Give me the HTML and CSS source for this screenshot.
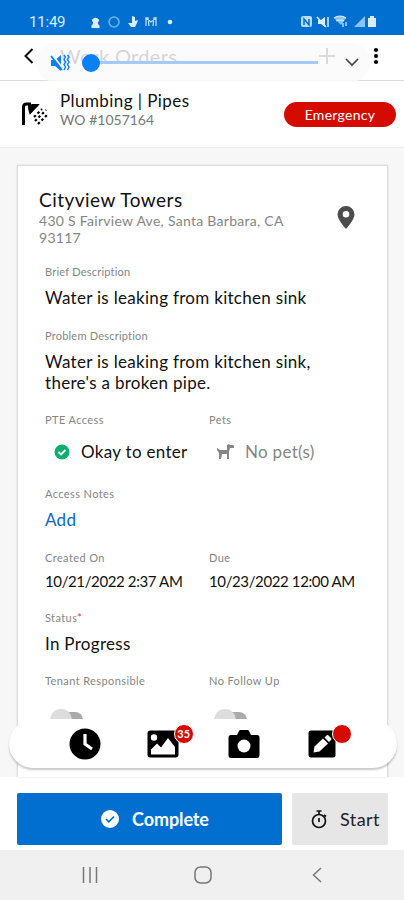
FILE: index.html
```html
<!DOCTYPE html>
<html lang="en">
<head>
  <meta charset="UTF-8">
  <meta name="viewport" content="width=device-width, initial-scale=1.0">
  <title>Work Orders</title>
  <link rel="stylesheet" href="styles.css">
</head>
<body>
  <div class="status-bar">
    <span class="clock">11:49</span>
    <svg class="status-left" width="86" height="14" viewBox="0 0 86 14" fill="none" stroke="#b9dcf6" stroke-width="1.5">
      <path d="M1.500 13v-2.500L3 9V6.500H2V4.500L3 4a3 3 0 0 1 5 0l1 .5v2H8V9l1.500 1.500V13z" fill="#d8eefc" stroke="none"/>
      <circle cx="24" cy="7" r="5" stroke="#73b5e8"/>
      <path d="M42 1l3 1v4l3-1-1 3-2 4h-4l-3-4h4z" fill="#d8eefc" stroke="none"/>
      <path d="M56 11V3l5 4 5-4v8M56 3h2l1 8M66 3h-2l-1 8" stroke-width="1.300"/>
      <circle cx="80" cy="7" r="2.300" fill="#d8eefc" stroke="none"/>
    </svg>
    <svg class="status-right" width="78" height="14" viewBox="0 0 78 14" fill="none" stroke="#d8eefc" stroke-width="1.500">
      <rect x="1" y="1" width="11" height="11" rx="2" fill="#b9dcf6" stroke="none"/>
      <path d="M4 10V4l5 6V4" stroke="#006fd0"/>
      <path d="M18 5h3l4-3v10l-4-3h-3z" fill="#d8eefc" stroke="none"/>
      <path d="M17 2l9 10M28 2v10" />
      <path d="M34 3q6-4 12 0l-5 7z" fill="#8dc4ee" stroke="none"/>
      <path d="M34 3q6-4 12 0M36 6q4-2 8 0M43 8v4M46 7v4" stroke-width="1.200"/>
      <path d="M65 1v11H54z" fill="#8dc4ee" stroke="none"/>
      <path d="M68 3h2V1h4v2h2v9h-8z" fill="#d8eefc" stroke="none"/>
    </svg>
  </div>

  <header class="header">
    <svg class="back" width="12" height="18" viewBox="0 0 12 18"><path d="M9.500 2L2.500 9l7 7" fill="none" stroke="#111" stroke-width="2"/></svg>
    <h1>Work Orders</h1>
    <svg class="plus" width="16" height="16" viewBox="0 0 16 16"><path d="M8 0v16M0 8h16" stroke="#333" stroke-width="2"/></svg>
    <svg class="more" width="6" height="18" viewBox="0 0 6 18"><circle cx="3" cy="3" r="2.100"/><circle cx="3" cy="9" r="2.100"/><circle cx="3" cy="15" r="2.100"/></svg>
    <div class="volume">
      <svg class="mute" width="20" height="20" viewBox="0 0 20 20" fill="none" stroke="#0a80f5" stroke-width="1.800">
        <path d="M1 7h4l6-5v16l-6-5H1z" fill="#0a80f5" stroke="none"/>
        <path d="M2 1l11 15" stroke="#fafafa" stroke-width="2"/>
        <path d="M1 3l11 14"/>
        <path d="M14 2l1.500 2L14 6.500 15.500 9 14 11.500l1.500 2.500L14 17M17.500 2L19 4l-1.500 2.500L19 9l-1.500 2.500L19 14l-1.500 3" stroke-width="1.400"/>
      </svg>
      <div class="slider"><span class="knob"></span></div>
      <svg class="expand" width="14" height="9" viewBox="0 0 14 9"><path d="M1 1l6 6 6-6" fill="none" stroke="#444" stroke-width="1.600"/></svg>
    </div>
  </header>

  <section class="job">
    <svg class="shower" width="27" height="24" viewBox="0 0 27 24">
      <path d="M2.500 23V5q0-3 3-3H10" fill="none" stroke="#000" stroke-width="3"/>
      <path d="M7 2q2 1 4 0h7q1 0 0 1L9.500 12q-1 1-1 0-2-5-1.500-10z"/>
      <g fill="none" stroke="#000" stroke-width="2.200" stroke-dasharray="2.500 2.500">
        <path d="M13 15l8-8M14 19l11-11M17 22l9-9"/>
      </g>
    </svg>
    <div class="job-text">
      <h2>Plumbing | Pipes</h2>
      <p>WO #1057164</p>
    </div>
    <span class="priority">Emergency</span>
  </section>

  <main class="content">
    <div class="card">
      <div class="location">
        <div>
          <h2>Cityview Towers</h2>
          <p class="street">430 S Fairview Ave, Santa Barbara, CA</p>
          <p class="zip">93117</p>
        </div>
        <svg class="pin" width="18" height="23" viewBox="0 0 18 23"><path fill="#4c4c4c" fill-rule="evenodd" d="M9 0a8.500 8.500 0 0 1 8.500 8.500C17.500 14 9 23 9 23S.5 14 .5 8.500A8.500 8.500 0 0 1 9 0zm0 5a3.300 3.300 0 1 0 0 6.600A3.300 3.300 0 0 0 9 5z"/></svg>
      </div>

      <div class="row brief">
        <div class="field"><label>Brief Description</label><p class="value">Water is leaking from kitchen sink</p></div>
      </div>
      <div class="row problem">
        <div class="field"><label>Problem Description</label><p class="value">Water is leaking from kitchen sink,</p><p class="value">there's a broken pipe.</p></div>
      </div>
      <div class="row access">
        <div class="field">
          <label>PTE Access</label>
          <div class="choice">
            <svg class="okay" width="16" height="16" viewBox="0 0 16 16"><circle cx="8" cy="8" r="7.500" fill="#0caf70"/><path d="M4.500 8l2.500 2.500L11.500 6" fill="none" stroke="#fff" stroke-width="1.800"/></svg>
            <p class="value">Okay to enter</p>
          </div>
        </div>
        <div class="field">
          <label>Pets</label>
          <div class="choice muted">
            <svg class="dog" width="18" height="16" viewBox="0 0 18 16" fill="#858585"><path d="M0 4l3 2h7V1l2-1 1 1h3l1 1v2h-4l-1 4v7h-2v-5H5L4 15H2V9L0 6z"/></svg>
            <p class="value">No pet(s)</p>
          </div>
        </div>
      </div>
      <div class="row notes">
        <div class="field"><label>Access Notes</label><a class="value link">Add</a></div>
      </div>
      <div class="row dates">
        <div class="field"><label>Created On</label><p class="value">10/21/2022 2:37 AM</p></div>
        <div class="field"><label>Due</label><p class="value">10/23/2022 12:00 AM</p></div>
      </div>
      <div class="row status">
        <div class="field"><label>Status<b>*</b></label><p class="value">In Progress</p></div>
      </div>
      <div class="row switches">
        <div class="field"><label>Tenant Responsible</label><span class="switch"></span></div>
        <div class="field"><label>No Follow Up</label><span class="switch"></span></div>
      </div>
    </div>
    <nav class="tools">
      <span class="tool">
        <svg width="32" height="32" viewBox="0 0 32 32"><circle cx="16" cy="16" r="15.500"/><path d="M16 6v10l7 5" fill="none" stroke="#fff" stroke-width="3.200"/></svg>
      </span>
      <span class="tool photos">
        <svg width="32" height="28" viewBox="0 0 32 28"><rect x=".5" y=".5" width="31" height="27" rx="3"/><circle cx="7" cy="7.500" r="3.200" fill="#fff"/><path d="M4 24.500v-5l6-6 4 4L21 8l7 9v7.500z" fill="#fff"/></svg>
        <b class="badge">35</b>
      </span>
      <span class="tool">
        <svg width="32" height="28" viewBox="0 0 32 28"><path d="M3 5h6l2-4q.5-1 1.500-1h7q1 0 1.500 1l2 4h6q2.500 0 2.500 2.500v17Q31.500 28 29 28H3Q.5 28 .5 25V8Q.5 5 3 5z"/><circle cx="16" cy="16" r="6.500" fill="#fff"/></svg>
      </span>
      <span class="tool">
        <svg width="28" height="28" viewBox="0 0 28 28"><rect x=".5" y=".5" width="27" height="27" rx="2.500"/><path d="M5.500 22.500l1-6 8.500-8 5 5-8.500 8zM16.500 7.500l2-2q1-1 2 0l2.500 2.500q1 1 0 2l-2 2z" fill="#fff"/></svg>
        <b class="badge dot"></b>
      </span>
    </nav>
  </main>

  <footer class="actions">
    <button class="complete">
      <svg width="18" height="18" viewBox="0 0 18 18"><circle cx="9" cy="9" r="9" fill="#fff"/><path d="M5 9l2.800 2.800L13 6.500" fill="none" stroke="#006fd0" stroke-width="1.700"/></svg>
      <span>Complete</span>
    </button>
    <button class="start">
      <svg width="16" height="19" viewBox="0 0 16 19" fill="none" stroke="#111" stroke-width="1.700"><circle cx="8" cy="11" r="6.500"/><path d="M5.500 1h5M8 1v3M13 5l2 1.500M8 8v4"/></svg>
      <span>Start</span>
    </button>
  </footer>

  <div class="android-nav">
    <svg width="16" height="16" viewBox="0 0 16 16"><path d="M1.500 0v16M8 0v16M14.500 0v16" stroke="#777" stroke-width="1.500"/></svg>
    <svg class="home" width="18" height="18" viewBox="0 0 18 18"><rect x="1" y="1" width="16" height="16" rx="5.500" fill="none" stroke="#777" stroke-width="1.500"/></svg>
    <svg width="10" height="16" viewBox="0 0 10 16"><path d="M9 1L1.500 8 9 15" fill="none" stroke="#777" stroke-width="1.500"/></svg>
  </div>
</body>
</html>
```
FILE: styles.css
```css
* {
  box-sizing: border-box;
}
body {
  margin: 0;
  width: 404px;
  height: 900px;
  overflow: hidden;
  font-family: Lato, "Open Sans", sans-serif;
  font-variant-ligatures: none;
  color: #111;
  background: #fff;
}
h1, h2, p {
  margin: 0;
  font-weight: normal;
}
svg {
  display: block;
  flex: none;
}
.status-bar {
  height: 35px;
  padding: 8px 26px 0 29px;
  display: flex;
  align-items: center;
  background: #006fd0;
}
.clock {
  width: 61px;
  font: 15px Roboto, sans-serif;
  letter-spacing: -.2px;
  color: #d8eefc;
}
.status-right {
  margin-left: auto;
}
.header {
  position: relative;
  height: 46px;
  padding: 0 25px 4px 23px;
  display: flex;
  align-items: center;
  border-bottom: 1px solid #ddd;
}
.header h1 {
  margin-left: 25px;
  font-size: 20px;
  line-height: 24px;
  letter-spacing: .3px;
}
.plus {
  margin-left: auto;
}
.more {
  margin-left: 38px;
}
/* volume panel slides over the header */
.volume {
  position: absolute;
  left: 36px;
  top: 8px;
  width: 334px;
  height: 39px;
  padding: 0 11px 0 14px;
  display: flex;
  align-items: center;
  border-radius: 19px;
  background: rgba(250, 250, 250, .84);
}
.slider {
  width: 236px;
  height: 3px;
  margin-left: 12px;
  display: flex;
  align-items: center;
  background: #a4caff;
}
.knob {
  width: 18px;
  height: 18px;
  border-radius: 50%;
  background: #0a80f5;
}
.expand {
  margin-left: 27px;
}
.job {
  height: 67px;
  padding: 0 8px 0 21px;
  display: flex;
  align-items: center;
  border-bottom: 1px solid #eee;
}
.job-text {
  height: 46px;
  margin-left: 12px;
}
.job-text h2 {
  font-size: 17px;
  line-height: 20px;
  letter-spacing: .43px;
}
.job-text p {
  font-size: 14px;
  line-height: 17px;
  color: #777;
}
.priority {
  width: 112px;
  height: 25px;
  margin-left: auto;
  border-radius: 13px;
  font-size: 14px;
  line-height: 26px;
  letter-spacing: .3px;
  text-align: center;
  color: #fff;
  background: #d50b00;
}
.content {
  position: relative;
  height: 629px;
  padding: 17px 16px 0 17px;
  background: #f7f7f7;
}
.card {
  height: 612px;
  padding: 21px 21px 0;
  border: 1px solid #ddd;
  border-bottom: 0;
  box-shadow: 0 0 2px rgba(0, 0, 0, .12);
  background: #fff;
}
.location {
  height: 77px;
  display: flex;
  justify-content: space-between;
}
.location h2 {
  font-size: 19px;
  line-height: 25px;
  letter-spacing: .48px;
}
.location p {
  font-size: 14px;
  line-height: 17px;
  letter-spacing: .28px;
  color: #858585;
}
.pin {
  margin: 19px 11px 0 0;
}
.row {
  display: grid;
  grid-template-columns: 164px 1fr;
  padding-left: 6px;
}
.field {
  white-space: nowrap;
}
.brief .field, .problem .field {
  grid-column: 1 / 3;
}
label {
  display: block;
  width: fit-content;
  font-size: 11px;
  line-height: 16px;
  letter-spacing: .4px;
  color: #858585;
}
.brief label, .problem label {
  letter-spacing: .22px;
}
label b {
  color: #e33;
  font-weight: normal;
}
.value {
  display: block;
  width: fit-content;
  font-size: 17px;
  line-height: 21px;
  letter-spacing: .3px;
}
label + .value {
  margin-top: 7px;
}
.brief {
  height: 64px;
}
.problem {
  height: 84px;
}
.access {
  height: 74px;
}
.notes {
  height: 64px;
}
.dates {
  height: 60px;
}
.dates .value {
  margin-top: 5px;
  font-size: 15px;
  letter-spacing: -.38px;
}
.status {
  height: 63px;
}
.switches {
  height: 46px;
  overflow: hidden;
}
.choice {
  margin-top: 13px;
  padding-left: 9px;
  display: flex;
  align-items: center;
}
.okay {
  margin-right: 11px;
}
.dog {
  margin-right: 10px;
}
.muted {
  padding-left: 8px;
  color: #858585;
}
.link {
  color: #0869c8;
}
/* off switches, cut off by the toolbar */
.switch {
  display: block;
  position: relative;
  width: 28px;
  height: 16px;
  margin: 23px 0 0 10px;
  border-radius: 8px;
  background: #aaa;
}
.switch::before {
  content: "";
  position: absolute;
  left: -5px;
  top: -3px;
  width: 22px;
  height: 22px;
  border-radius: 50%;
  background: #ddd;
}
.tools {
  position: absolute;
  left: 9px;
  top: 572px;
  width: 388px;
  height: 48px;
  padding: 0 61px 0 60px;
  display: flex;
  align-items: center;
  justify-content: space-between;
  border-radius: 24px;
  background: #fff;
  box-shadow: 0 2px 2px rgba(0, 0, 0, .22);
}
.tool {
  position: relative;
}
.photos {
  margin: 0 2px 0 -2px;
}
.badge {
  position: absolute;
  left: 27px;
  top: -6px;
  width: 20px;
  height: 20px;
  border: 1px solid #fff;
  border-radius: 50%;
  font-size: 11px;
  line-height: 18px;
  text-align: center;
  color: #fff;
  background: #d50b00;
}
.dot {
  left: 24px;
}
.actions {
  height: 73px;
  padding: 16px 16px 0 17px;
  display: flex;
  gap: 10px;
}
button {
  height: 52px;
  padding: 0;
  display: flex;
  align-items: center;
  justify-content: center;
  gap: 13px;
  border: 0;
  border-radius: 2px;
  font-family: inherit;
  font-size: 18px;
}
.complete {
  width: 265px;
  padding-left: 11px;
  color: #fff;
  font-weight: bold;
  letter-spacing: -.1px;
  background: #006fd0;
}
.start {
  width: 96px;
  padding-left: 11px;
  letter-spacing: .4px;
  color: #222;
  background: #e6e6e6;
}
.android-nav {
  height: 50px;
  padding: 0 82px;
  display: flex;
  align-items: center;
  justify-content: space-between;
  background: #f0f0f0;
}
.home {
  margin: 0 4px 0 0;
}
```
